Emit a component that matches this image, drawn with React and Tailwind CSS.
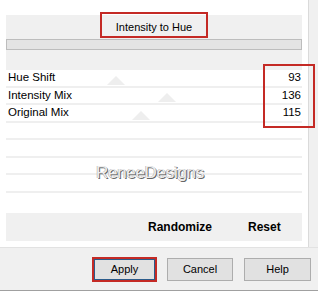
import React from "react";

const font = { fontFamily: '"Liberation Sans", Arial, sans-serif' };

function Thumb({ left }) {
  return (
    <svg
      className="absolute bottom-[1px]"
      style={{ left }}
      width="18"
      height="9"
      viewBox="0 0 18 9"
    >
      <polygon points="0,9 9,0 18,9" fill="#eeeeee" />
    </svg>
  );
}

function Row({ label, value, thumb }) {
  return (
    <div className="relative flex h-[17.5px] items-center justify-between border-b-2 border-[#efefef] pl-[2px] pr-[1px] text-[11.5px] leading-none text-black">
      {thumb !== undefined && <Thumb left={thumb} />}
      <span className="relative">{label}</span>
      <span className="relative">{value}</span>
    </div>
  );
}

export default function App() {
  return (
    <div
      className="relative flex h-[291px] w-[318px] flex-col overflow-hidden bg-[#f0f0f0]"
      style={font}
    >
      <div className="flex h-[247px]">
        <div className="flex h-full w-[309px] flex-col border-r border-[#dadada] bg-white px-[6px] pt-[15px]">
          <div className="flex h-[55px] flex-col bg-[#f0f0f0]">
            <div className="relative flex h-[24px] items-center justify-center text-[11px] text-black">
              Intensity to Hue
              <div className="absolute left-[94px] top-[-3px] h-[26px] w-[108px] border-2 border-[#c42a25]" />
            </div>
            <div className="h-[11px] border border-[#bdbdbd] bg-[#e4e4e4]" />
          </div>
          <div className="flex h-[143px] flex-col">
            <Row label="Hue Shift" value="93" thumb={101} />
            <Row label="Intensity Mix" value="136" thumb={152} />
            <Row label="Original Mix" value="115" thumb={126} />
            <Row label="" value="" />
            <Row label="" value="" />
            <Row label="" value="" />
            <Row label="" value="" />
          </div>
          <div className="flex h-[28px] items-center bg-[#f0f0f0] text-[12px] font-bold text-black">
            <span className="ml-[142px]">Randomize</span>
            <span className="ml-[36px]">Reset</span>
          </div>
        </div>
      </div>
      <div className="flex h-[44px] items-center border-t border-[#e2e2e2] border-b border-b-[#a0a0a0] pl-[92px] text-[11px] text-black">
        <div className="flex h-[25px] w-[65px] items-center justify-center border-2 border-[#c42a25] bg-[#e1e1e1]">
          <div className="flex h-full w-full items-center justify-center border border-[#2b5b8a]">
            Apply
          </div>
        </div>
        <div className="ml-[10px] flex h-[23px] w-[66px] items-center justify-center border border-[#adadad] bg-[#e1e1e1]">
          Cancel
        </div>
        <div className="ml-[11px] flex h-[23px] w-[67px] items-center justify-center border border-[#adadad] bg-[#e1e1e1]">
          Help
        </div>
      </div>
      <div className="absolute left-[263px] top-[64px] h-[64px] w-[52px] border-2 border-[#c42a25]" />
      <div className="absolute left-[96px] top-[164px] text-[17px] leading-none tracking-[-0.3px] text-[#eeeeee] [text-shadow:1px_1px_0_#666,-0.5px_-0.5px_0_#aaa]">
        ReneeDesigns
      </div>
    </div>
  );
}
